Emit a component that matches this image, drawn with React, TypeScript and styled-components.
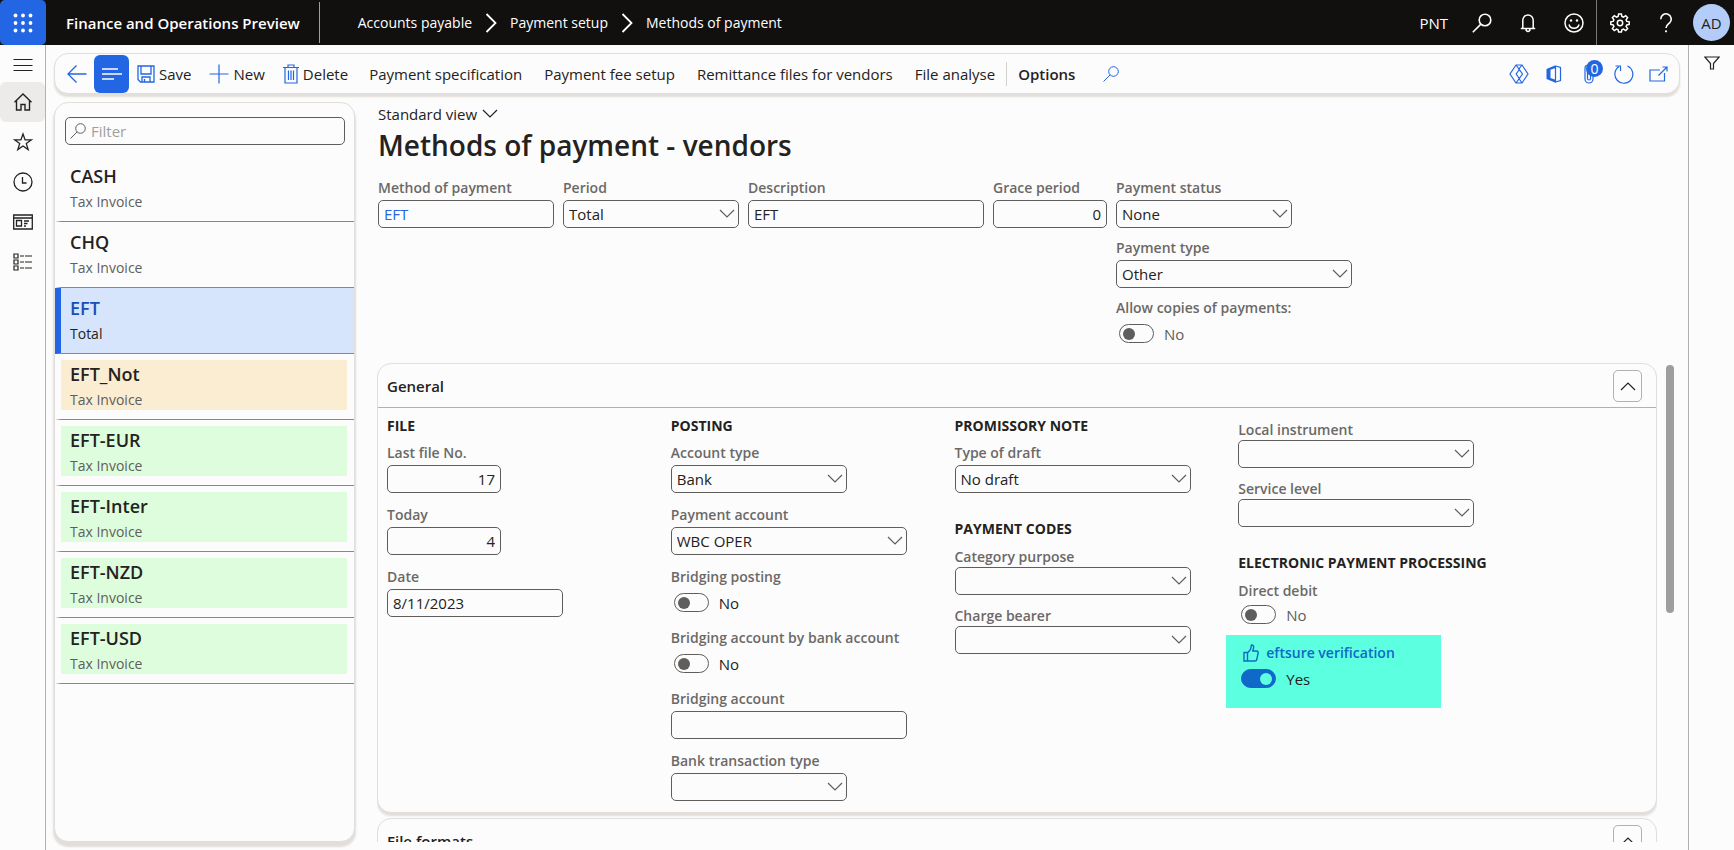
import React, { useId, useState } from "react";
import styled, { createGlobalStyle } from "styled-components";

const ink = "#242220";
const blue = "#2266e3";
const muted = "#605e5c";
const edge = "#e1dedb";
const surface = "#fcfcfc";

const GlobalStyle = createGlobalStyle`
  *, *::before, *::after { box-sizing: border-box; }
  body {
    margin: 0;
    background: ${surface};
    color: ${ink};
    font: 15px/20px "Open Sans", "Noto Sans", sans-serif;
  }
  button, input, select { font: inherit; color: inherit; }
  h1, h2, h3, p, ul { margin: 0; padding: 0; }
`;

/* ---------- icons ---------- */

const Svg = styled.svg`
  display: block;
  flex: none;
  fill: none;
  stroke: currentColor;
`;

type GlyphProps = { w?: number; h?: number; weight?: number; children: React.ReactNode };

const Glyph = ({ w = 20, h = 20, weight = 1.2, children }: GlyphProps) => (
  <Svg width={w} height={h} viewBox={`0 0 ${w} ${h}`} strokeWidth={weight} aria-hidden="true">
    {children}
  </Svg>
);

const Waffle = () => (
  <Glyph>
    {[2.5, 10, 17.5].map((y) =>
      [2.5, 10, 17.5].map((x) => (
        <circle key={`${x}-${y}`} cx={x} cy={y} r="1.9" fill="currentColor" stroke="none" />
      )),
    )}
  </Glyph>
);
const Lines = () => (
  <Glyph weight={1}>
    <path d="M0.5 4.5H19.5M0.5 10.5H19.5M0.5 15.5H19.5" />
  </Glyph>
);
const Home = () => (
  <Glyph weight={1.4}>
    <path d="M1.5 10.3L10 2l8.500 8.300M3.500 8.800V18H8v-5.500h4V18h4.500V8.800" />
  </Glyph>
);
const Star = () => (
  <Glyph weight={1.3}>
    <path d="M10 2l2.100 5.900h6.200l-5 3.700 1.900 6L10 14l-5.200 3.600 1.900-6-5-3.700h6.200z" />
  </Glyph>
);
const Clock = () => (
  <Glyph weight={1.3}>
    <circle cx="10" cy="10" r="9" />
    <path d="M9.500 5v6H13.500" />
  </Glyph>
);
const Workspaces = () => (
  <Glyph weight={1.3}>
    <path d="M.7 3h18.600v14H.7zM.7 6H19.300M3.500 8.500h5v5.500h-5zM11 9h5M11 11.500h3.500M11 14h2" />
  </Glyph>
);
const Modules = () => (
  <Glyph weight={1.2}>
    <path d="M1 2h4v4H1zM1 8h4v4H1zM1 14h4v4H1zM7 4h4M12 4h7M7 10h4M12 10h7M7 16h4M12 16h7" />
  </Glyph>
);
const Search = ({ weight = 1.2 }: { weight?: number }) => (
  <Glyph weight={weight}>
    <circle cx="13" cy="7" r="5.800" />
    <path d="M8.900 11.100L.8 19.200" />
  </Glyph>
);
const SmallSearch = () => (
  <Glyph w={16} h={16} weight={1}>
    <circle cx="10.500" cy="5.500" r="4.800" />
    <path d="M7.100 8.900L.5 15.500" />
  </Glyph>
);
const Bell = () => (
  <Glyph weight={1.500}>
    <path d="M2.800 15.500h14.400M4.800 15.500V7.200a5.200 5.200 0 0 1 10.400 0v8.300M8 16a2 2.400 0 0 0 4 0" />
  </Glyph>
);
const Smiley = () => (
  <Glyph weight={1.500}>
    <circle cx="10" cy="10" r="9" />
    <path d="M5 11.500a5.200 5.200 0 0 0 10 0" />
    <circle cx="7" cy="7.500" r="1.200" fill="currentColor" stroke="none" />
    <circle cx="13" cy="7.500" r="1.200" fill="currentColor" stroke="none" />
  </Glyph>
);
const Gear = () => (
  <Glyph weight={1.500}>
    <circle cx="10" cy="10" r="2.700" />
    <path d="M8.600 1h2.800l.5 2.500 1.600.7 2.200-1.500 1.900 1.900-1.500 2.200.7 1.600 2.400.4v2.600l-2.400.5-.7 1.600 1.500 2.200-1.900 1.900-2.200-1.500-1.600.7-.5 2.300H8.600l-.5-2.300-1.600-.7-2.200 1.500-1.900-1.900 1.500-2.200-.7-1.600-2.400-.5V8.800l2.400-.4.700-1.600-1.500-2.200 1.900-1.900 2.200 1.500 1.600-.7z" />
  </Glyph>
);
const Help = () => (
  <Glyph weight={1.600}>
    <path d="M4.800 6.200a5.200 5.200 0 1 1 8.800 3.600C11.200 11.800 10 12.500 10 15" />
    <circle cx="10" cy="18.300" r="1.100" fill="currentColor" stroke="none" />
  </Glyph>
);
const Back = () => (
  <Glyph weight={1.300}>
    <path d="M19.500 10H1M9.500 1.500L1 10l8.500 8.500" />
  </Glyph>
);
const ListLines = () => (
  <Glyph weight={1.600}>
    <path d="M0 5H16M0 10H20M0 15H12" />
  </Glyph>
);
const SaveIcon = () => (
  <Glyph w={18} h={18} weight={1.300}>
    <path d="M1 1h16v16H3.500L1 14.500zM4 1v8h10V1M5 17v-5h8v5M7.500 14v3" />
  </Glyph>
);
const Plus = () => (
  <Glyph weight={1.200}>
    <path d="M10 .5v19M.5 10h19" />
  </Glyph>
);
const Trash = () => (
  <Glyph w={16} h={20} weight={1.200}>
    <path d="M0 3.500h16M5 3.500V1h6v2.500M2 3.500V19h12V3.500M5.500 6.500v9.500M8 6.500v9.500M10.500 6.500v9.500" />
  </Glyph>
);
const Diamond = () => (
  <Glyph weight={1.200}>
    <path d="M7 1h6l6 9-6 9H7l-6-9zM7 1l6.500 9L7 19M13 1L9.500 5.500M10 14.500L13 19M10.300 5.500L7.200 10l3 4.500" />
  </Glyph>
);
const Office = () => (
  <Glyph w={16} h={18}>
    <path d="M.5 4L9.500.3V3L4.500 4.800V13l5 1.800v2.900L.5 14z" fill="currentColor" stroke="none" />
    <path d="M9.500 1l5 1.500v13l-5 1.500V1" />
  </Glyph>
);
const Clip = () => (
  <Glyph w={10} h={20}>
    <path d="M1 4v11a4 4 0 0 0 8 0V6M3.500 5v9.500a1.500 1.500 0 0 0 3 0V4A2.700 2.700 0 0 0 1 4" />
  </Glyph>
);
const Refresh = () => (
  <Glyph weight={1.200}>
    <path d="M13.500 2a9 9 0 1 1-8.600.7M1.500 2h5v5" />
  </Glyph>
);
const PopOut = () => (
  <Glyph w={19} h={16} weight={1.200}>
    <path d="M11 4H1v11h14.500V7M9.500 9.500L18 1M13.500 1H18v4.500" />
  </Glyph>
);
const Funnel = () => (
  <Glyph w={16} h={14} weight={1.200}>
    <path d="M.8 1h14.400L9.500 7.500V13h-3V7.500z" />
  </Glyph>
);
const Thumb = () => (
  <Glyph w={16} h={18} weight={1.400}>
    <path d="M1 8.500h3.500V17H1zM4.500 9l3-3.500L8.500 1c1.800 0 2.500 1.500 2 3.200L9.800 7h3.700c1.300 0 1.900 1 1.600 2l-1.300 6.500c-.2 1-.9 1.500-1.800 1.500H4.500" />
  </Glyph>
);
const ChevronDown = () => (
  <Glyph w={16} h={10}>
    <path d="M1 1l7 7 7-7" />
  </Glyph>
);
const ChevronUp = () => (
  <Glyph w={16} h={10}>
    <path d="M1 9l7-7 7 7" />
  </Glyph>
);
const ChevronRight = () => (
  <Glyph w={12} h={20} weight={1.800}>
    <path d="M1.500 1l9 9-9 9" />
  </Glyph>
);

/* ---------- shell ---------- */

const Page = styled.div`
  display: flex;
  flex-direction: column;
  height: 100vh;
  overflow: hidden;
`;

const TopBar = styled.header`
  flex: none;
  display: flex;
  align-items: stretch;
  height: 45px;
  background: #11100f;
  color: #fff;
`;

const PlainButton = styled.button`
  display: flex;
  align-items: center;
  justify-content: center;
  padding: 0;
  border: 0;
  background: none;
  cursor: pointer;
`;

const WaffleButton = styled(PlainButton)`
  width: 46px;
  border-radius: 5px;
  background: ${blue};
`;

const Product = styled.span`
  display: flex;
  align-items: center;
  padding: 0 19px 0 20px;
  margin: 2px 0;
  border-right: 1px solid #a19f9d;
  font-weight: 600;
`;

const Crumbs = styled.nav`
  flex: 1;
  display: flex;
  align-items: center;
  gap: 13px;
  padding-left: 38px;
  font-size: 14px;
`;

const Crumb = styled.a`
  color: inherit;
  text-decoration: none;
`;

const TopTools = styled.div`
  display: flex;
  align-items: stretch;
`;

const Company = styled(PlainButton)`
  padding: 0 11px;
`;

const TopTool = styled(PlainButton)<{ $divided?: boolean }>`
  width: 46px;
  border-right: ${(p) => (p.$divided ? "1px solid #797775" : "0")};
`;

const Avatar = styled(PlainButton)`
  align-self: center;
  width: 37px;
  height: 37px;
  margin: 0 4px;
  border-radius: 50%;
  background: #b4cdf8;
  color: ${ink};
`;

const Body = styled.div`
  flex: 1;
  display: flex;
  min-height: 0;
`;

const Rail = styled.nav`
  flex: none;
  width: 46px;
  padding-top: 3px;
  border-right: 1px solid #b3b0ad;
`;

const RailButton = styled(PlainButton)<{ $active?: boolean; $short?: boolean }>`
  width: 100%;
  height: ${(p) => (p.$short ? 34 : 40)}px;
  border-radius: 6px;
  background: ${(p) => (p.$active ? "#edebe9" : "none")};
`;

const FilterRail = styled.aside`
  flex: none;
  width: 46px;
  padding: 11px 0 0 15px;
  border-left: 1px solid #b3b0ad;
`;

const Workspace = styled.div`
  flex: 1;
  min-width: 0;
  display: flex;
  flex-direction: column;
  gap: 8px;
  padding: 8px;
`;

const Surface = styled.section`
  border: 1px solid ${edge};
  border-radius: 14px;
  background: ${surface};
  box-shadow: 0 3px 2px ${edge};
`;

/* ---------- action bar ---------- */

const ActionBar = styled(Surface)`
  flex: none;
  display: flex;
  align-items: center;
  height: 41px;
  padding: 0 3px 0 12px;
`;

const BackButton = styled(PlainButton)`
  margin-right: 7px;
  color: ${blue};
`;

const ListToggle = styled(PlainButton)`
  width: 35px;
  height: 38px;
  border-radius: 6px;
  background: ${blue};
  color: #fff;
`;

const Action = styled(PlainButton)<{ $strong?: boolean; $icon?: boolean }>`
  gap: 4px;
  height: 38px;
  padding: ${(p) => (p.$icon ? "0 10px 0 8px" : "0 11px")};
  font-weight: ${(p) => (p.$strong ? 600 : 400)};
  white-space: nowrap;
  svg { color: ${blue}; }
`;

const ActionDivider = styled.span`
  width: 1px;
  height: 24px;
  background: #d2d0ce;
`;

const ActionSearch = styled(PlainButton)`
  width: 50px;
  height: 38px;
  color: ${blue};
`;

const BarTools = styled.div`
  display: flex;
  align-items: center;
  margin-left: auto;
  color: ${blue};
`;

const BarTool = styled(PlainButton)`
  position: relative;
  width: 35px;
  height: 38px;
`;

const Badge = styled.span`
  position: absolute;
  top: 5px;
  right: 3px;
  width: 17px;
  height: 17px;
  border-radius: 50%;
  background: ${blue};
  color: #fff;
  font-size: 14px;
  line-height: 17px;
  text-align: center;
`;

/* ---------- record list ---------- */

const Columns = styled.div`
  flex: 1;
  display: flex;
  gap: 22px;
  min-height: 0;
`;

const ListPanel = styled(Surface)`
  flex: none;
  width: 301px;
  padding-top: 14px;
  box-shadow: 0 4px 2px 1px ${edge};
`;

const FilterBox = styled.label`
  display: flex;
  align-items: center;
  gap: 5px;
  height: 28px;
  margin: 0 9px 11px 10px;
  padding: 0 4px;
  border: 1px solid ${muted};
  border-radius: 5px;
  color: ${muted};

  input {
    flex: 1;
    min-width: 0;
    padding: 0;
    border: 0;
    outline: 0;
    background: none;
  }
  input::placeholder { color: #a19f9d; opacity: 1; }
`;

const Records = styled.ul`
  list-style: none;
`;

const RecordRow = styled.li<{ $selected: boolean }>`
  height: 66px;
  padding: 6px 7px 9px 0;
  border-bottom: 1px solid #8a8886;
  border-left: 6px solid ${(p) => (p.$selected ? blue : "transparent")};
  background: ${(p) => (p.$selected ? "#d7e5fc" : "none")};
  background-clip: padding-box;
`;

const RecordButton = styled.button<{ $tint?: string }>`
  display: flex;
  flex-direction: column;
  gap: 4px;
  width: 100%;
  height: 50px;
  padding: 2px 9px 0;
  border: 0;
  background: ${(p) => p.$tint ?? "none"};
  text-align: left;
  cursor: pointer;
`;

const RecordName = styled.span<{ $selected: boolean }>`
  font-size: 18px;
  line-height: 24px;
  font-weight: 600;
  color: ${(p) => (p.$selected ? "#164fb8" : ink)};
`;

const RecordNote = styled.span<{ $selected: boolean }>`
  font-size: 14px;
  color: ${(p) => (p.$selected ? ink : muted)};
`;

/* ---------- details ---------- */

const Main = styled.main`
  flex: 1;
  min-width: 0;
  display: flex;
  flex-direction: column;
`;

const Heading = styled.div`
  padding: 0 0 14px 1px;
`;

const ViewButton = styled(PlainButton)`
  gap: 5px;
  height: 24px;
`;

const Title = styled.h1`
  font-size: 28px;
  line-height: 38px;
  font-weight: 600;
`;

const HeaderFields = styled.div`
  display: flex;
  gap: 9px;
  padding: 0 0 16px 1px;
`;

const Stack = styled.div<{ $gap?: number; $lead?: number }>`
  display: flex;
  flex-direction: column;
  align-items: flex-start;
  gap: ${(p) => p.$gap ?? 12}px;
  padding-top: ${(p) => p.$lead ?? 0}px;
`;

const widths = { small: 114, medium: 176, large: 236 };
type Size = keyof typeof widths;

const FieldBox = styled.div<{ $dense?: boolean }>`
  display: flex;
  flex-direction: column;
  gap: ${(p) => (p.$dense ? 0 : 2)}px;
`;

const FieldLabel = styled.label`
  font-size: 14px;
  font-weight: 600;
  line-height: 20px;
  color: #6b6967;
  white-space: nowrap;
`;

const TextInput = styled.input<{ $size: Size; $numeric?: boolean; $link?: boolean }>`
  width: ${(p) => widths[p.$size]}px;
  height: 28px;
  padding: 0 5px;
  border: 1px solid ${muted};
  border-radius: 5px;
  background: none;
  color: ${(p) => (p.$link ? blue : ink)};
  text-align: ${(p) => (p.$numeric ? "right" : "left")};
`;

const SelectBox = styled.div<{ $size: Size }>`
  position: relative;
  width: ${(p) => widths[p.$size]}px;

  svg {
    position: absolute;
    top: 9px;
    right: 4px;
    color: ${muted};
    pointer-events: none;
  }
`;

const NativeSelect = styled.select`
  appearance: none;
  display: block;
  width: 100%;
  height: 28px;
  padding: 0 22px 0 5px;
  border: 1px solid ${muted};
  border-radius: 5px;
  background: none;
  color: ${ink};
`;

const SwitchRow = styled.div<{ $quiet?: boolean }>`
  display: flex;
  align-items: center;
  gap: 10px;
  height: 27px;
  padding-left: 3px;
  color: ${(p) => (p.$quiet ? muted : ink)};
`;

const SwitchInput = styled.input`
  appearance: none;
  display: flex;
  align-items: center;
  width: 35px;
  height: 19px;
  margin: 0;
  padding: 0 3px;
  border: 1px solid ${muted};
  border-radius: 10px;
  cursor: pointer;

  &::before {
    content: "";
    width: 12px;
    height: 12px;
    border-radius: 50%;
    background: ${muted};
  }
  &:checked {
    justify-content: flex-end;
    border-color: #1068c8;
    background: #1068c8;
  }
  &:checked::before { background: #5cffe0; }
`;

const Scroller = styled.div`
  flex: 1;
  display: flex;
  gap: 9px;
  min-height: 0;
  padding-right: 6px;
`;

const Sections = styled.div`
  flex: 1;
  min-width: 0;
  display: flex;
  flex-direction: column;
  gap: 5px;
  overflow: hidden;
`;

const Track = styled.div`
  flex: none;
  width: 8px;
  padding-top: 2px;
`;

const ScrollThumb = styled.div`
  height: 52%;
  border-radius: 4px;
  background: #9e9e9e;
`;

const FastTab = styled(Surface)`
  flex: none;
`;

const FastTabHead = styled.div`
  display: flex;
  align-items: center;
  justify-content: space-between;
  height: 44px;
  padding: 0 14px 0 9px;
  border-bottom: 1px solid #b3b0ad;
`;

const FastTabTitle = styled.h2`
  font-size: 15px;
  font-weight: 600;
`;

const CollapseButton = styled(PlainButton)`
  width: 29px;
  height: 32px;
  border: 1px solid #b3b0ad;
  border-radius: 5px;
`;

const FastTabBody = styled.div`
  display: grid;
  grid-template-columns: repeat(4, 1fr);
  padding: 8px 134px 11px 9px;
`;

const GroupTitle = styled.h3`
  font-size: 14px;
  font-weight: 700;
  line-height: 20px;
  white-space: nowrap;
`;

const Highlight = styled.div`
  width: 215px;
  height: 73px;
  margin: -5px 0 0 -12px;
  padding: 8px 12px;
  background: #5cffe0;
`;

const VerifyLabel = styled.label`
  display: flex;
  align-items: center;
  gap: 7px;
  padding: 0 0 2px 5px;
  font-size: 14px;
  font-weight: 600;
  color: #1068c8;
`;

/* ---------- form parts ---------- */

type FieldProps = {
  label: string;
  value?: string;
  size?: Size;
  dense?: boolean;
};

const Text = ({ label, value = "", size = "medium", dense, numeric, link }: FieldProps & { numeric?: boolean; link?: boolean }) => {
  const id = useId();
  return (
    <FieldBox $dense={dense}>
      <FieldLabel htmlFor={id}>{label}</FieldLabel>
      <TextInput id={id} $size={size} $numeric={numeric} $link={link} defaultValue={value} />
    </FieldBox>
  );
};

const Choice = ({ label, value = "", size = "large", dense }: FieldProps) => {
  const id = useId();
  return (
    <FieldBox $dense={dense}>
      <FieldLabel htmlFor={id}>{label}</FieldLabel>
      <SelectBox $size={size}>
        <NativeSelect id={id} defaultValue={value}>
          <option value={value}>{value}</option>
        </NativeSelect>
        <ChevronDown />
      </SelectBox>
    </FieldBox>
  );
};

const Switch = ({ label, dense, quiet }: { label: string; dense?: boolean; quiet?: boolean }) => {
  const id = useId();
  const [on, setOn] = useState(false);
  return (
    <FieldBox $dense={dense}>
      <FieldLabel htmlFor={id}>{label}</FieldLabel>
      <SwitchRow $quiet={quiet}>
        <SwitchInput id={id} type="checkbox" role="switch" checked={on} onChange={() => setOn(!on)} />
        {on ? "Yes" : "No"}
      </SwitchRow>
    </FieldBox>
  );
};

const Verification = () => {
  const id = useId();
  const [on, setOn] = useState(true);
  return (
    <Highlight>
      <VerifyLabel htmlFor={id}>
        <Thumb />
        eftsure verification
      </VerifyLabel>
      <SwitchRow>
        <SwitchInput id={id} type="checkbox" role="switch" checked={on} onChange={() => setOn(!on)} />
        {on ? "Yes" : "No"}
      </SwitchRow>
    </Highlight>
  );
};

const amber = "#faedd2";
const green = "#defddc";

const records = [
  { name: "CASH", note: "Tax Invoice" },
  { name: "CHQ", note: "Tax Invoice" },
  { name: "EFT", note: "Total" },
  { name: "EFT_Not", note: "Tax Invoice", tint: amber },
  { name: "EFT-EUR", note: "Tax Invoice", tint: green },
  { name: "EFT-Inter", note: "Tax Invoice", tint: green },
  { name: "EFT-NZD", note: "Tax Invoice", tint: green },
  { name: "EFT-USD", note: "Tax Invoice", tint: green },
];

export default function App() {
  const [current, setCurrent] = useState("EFT");

  return (
    <Page>
      <GlobalStyle />
      <TopBar>
        <WaffleButton aria-label="App launcher"><Waffle /></WaffleButton>
        <Product>Finance and Operations Preview</Product>
        <Crumbs aria-label="Breadcrumb">
          <Crumb href="#payable">Accounts payable</Crumb>
          <ChevronRight />
          <Crumb href="#setup">Payment setup</Crumb>
          <ChevronRight />
          <Crumb href="#methods">Methods of payment</Crumb>
        </Crumbs>
        <TopTools>
          <Company>PNT</Company>
          <TopTool aria-label="Search"><Search weight={1.6} /></TopTool>
          <TopTool aria-label="Notifications"><Bell /></TopTool>
          <TopTool aria-label="Feedback" $divided><Smiley /></TopTool>
          <TopTool aria-label="Settings"><Gear /></TopTool>
          <TopTool aria-label="Help"><Help /></TopTool>
          <Avatar aria-label="Account">AD</Avatar>
        </TopTools>
      </TopBar>

      <Body>
        <Rail aria-label="Main">
          <RailButton $short aria-label="Expand navigation"><Lines /></RailButton>
          <RailButton $active aria-label="Home"><Home /></RailButton>
          <RailButton aria-label="Favorites"><Star /></RailButton>
          <RailButton aria-label="Recent"><Clock /></RailButton>
          <RailButton aria-label="Workspaces"><Workspaces /></RailButton>
          <RailButton aria-label="Modules"><Modules /></RailButton>
        </Rail>

        <Workspace>
          <ActionBar>
            <BackButton aria-label="Back"><Back /></BackButton>
            <ListToggle aria-label="Show list"><ListLines /></ListToggle>
            <Action $icon><SaveIcon />Save</Action>
            <Action $icon><Plus />New</Action>
            <Action $icon><Trash />Delete</Action>
            <Action>Payment specification</Action>
            <Action>Payment fee setup</Action>
            <Action>Remittance files for vendors</Action>
            <Action>File analyse</Action>
            <ActionDivider />
            <Action $strong>Options</Action>
            <ActionSearch aria-label="Search actions"><SmallSearch /></ActionSearch>
            <BarTools>
              <BarTool aria-label="Power Apps"><Diamond /></BarTool>
              <BarTool aria-label="Open in Office"><Office /></BarTool>
              <BarTool aria-label="Attachments"><Clip /><Badge>0</Badge></BarTool>
              <BarTool aria-label="Refresh"><Refresh /></BarTool>
              <BarTool aria-label="Open in new window"><PopOut /></BarTool>
            </BarTools>
          </ActionBar>

          <Columns>
            <ListPanel aria-label="Records">
              <FilterBox>
                <SmallSearch />
                <input placeholder="Filter" aria-label="Filter" />
              </FilterBox>
              <Records>
                {records.map((r) => (
                  <RecordRow key={r.name} $selected={r.name === current}>
                    <RecordButton $tint={r.tint} onClick={() => setCurrent(r.name)}>
                      <RecordName $selected={r.name === current}>{r.name}</RecordName>
                      <RecordNote $selected={r.name === current}>{r.note}</RecordNote>
                    </RecordButton>
                  </RecordRow>
                ))}
              </Records>
            </ListPanel>

            <Main>
              <Heading>
                <ViewButton>Standard view<ChevronDown /></ViewButton>
                <Title>Methods of payment - vendors</Title>
              </Heading>
              <HeaderFields>
                <Text label="Method of payment" value="EFT" link />
                <Choice label="Period" value="Total" size="medium" />
                <Text label="Description" value="EFT" size="large" />
                <Text label="Grace period" value="0" size="small" numeric />
                <Stack $gap={10}>
                  <Choice label="Payment status" value="None" size="medium" />
                  <Choice label="Payment type" value="Other" />
                  <Switch label="Allow copies of payments:" quiet />
                </Stack>
              </HeaderFields>

              <Scroller>
                <Sections>
                  <FastTab>
                    <FastTabHead>
                      <FastTabTitle>General</FastTabTitle>
                      <CollapseButton aria-label="Collapse General"><ChevronUp /></CollapseButton>
                    </FastTabHead>
                    <FastTabBody>
                      <Stack $gap={7}>
                        <GroupTitle>FILE</GroupTitle>
                        <Stack>
                          <Text label="Last file No." value="17" size="small" numeric />
                          <Text label="Today" value="4" size="small" numeric />
                          <Text label="Date" value="8/11/2023" />
                        </Stack>
                      </Stack>

                      <Stack $gap={7}>
                        <GroupTitle>POSTING</GroupTitle>
                        <Stack>
                          <Choice label="Account type" value="Bank" size="medium" />
                          <Choice label="Payment account" value="WBC OPER" />
                          <Switch label="Bridging posting" />
                          <Switch label="Bridging account by bank account" />
                          <Text label="Bridging account" size="large" />
                          <Choice label="Bank transaction type" size="medium" />
                        </Stack>
                      </Stack>

                      <Stack $gap={26}>
                        <Stack $gap={7}>
                          <GroupTitle>PROMISSORY NOTE</GroupTitle>
                          <Choice label="Type of draft" value="No draft" />
                        </Stack>
                        <Stack $gap={8}>
                          <GroupTitle>PAYMENT CODES</GroupTitle>
                          <Stack $gap={11}>
                            <Choice label="Category purpose" dense />
                            <Choice label="Charge bearer" dense />
                          </Stack>
                        </Stack>
                      </Stack>

                      <Stack $gap={26} $lead={4}>
                        <Stack $gap={11}>
                          <Choice label="Local instrument" dense />
                          <Choice label="Service level" dense />
                        </Stack>
                        <Stack $gap={8}>
                          <GroupTitle>ELECTRONIC PAYMENT PROCESSING</GroupTitle>
                          <Stack>
                            <Switch label="Direct debit" dense quiet />
                            <Verification />
                          </Stack>
                        </Stack>
                      </Stack>
                    </FastTabBody>
                  </FastTab>

                  <FastTab>
                    <FastTabHead>
                      <FastTabTitle>File formats</FastTabTitle>
                      <CollapseButton aria-label="Collapse File formats"><ChevronUp /></CollapseButton>
                    </FastTabHead>
                  </FastTab>
                </Sections>
                <Track><ScrollThumb /></Track>
              </Scroller>
            </Main>
          </Columns>
        </Workspace>

        <FilterRail>
          <PlainButton aria-label="Show filters"><Funnel /></PlainButton>
        </FilterRail>
      </Body>
    </Page>
  );
}
